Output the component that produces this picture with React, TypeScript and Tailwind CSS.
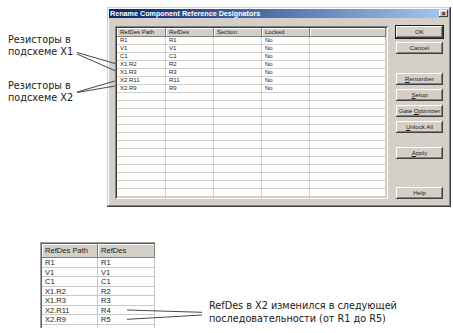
const topRows = [
  ["R1", "R1", "", "No"],
  ["V1", "V1", "", "No"],
  ["C1", "C1", "", "No"],
  ["X1.R2", "R2", "", "No"],
  ["X1.R3", "R3", "", "No"],
  ["X2.R11", "R11", "", "No"],
  ["X2.R9", "R9", "", "No"],
];

const bottomRows = [
  ["R1", "R1"],
  ["V1", "V1"],
  ["C1", "C1"],
  ["X1.R2", "R2"],
  ["X1.R3", "R3"],
  ["X2.R11", "R4"],
  ["X2.R9", "R5"],
  ["", ""],
];

const topCols = ["w-[49px]", "w-[48px]", "w-[48px]", "w-[48px]", "flex-1"];

function WinButton({ children, isDefault }: { children: React.ReactNode; isDefault?: boolean }) {
  return (
    <div
      className={`flex h-[12px] w-[47px] items-center justify-center bg-[#d4d0c8] text-[6.2px] leading-none text-[#1a1a1a] shadow-[inset_-1px_-1px_#404040,inset_1px_1px_#ffffff,inset_-2px_-2px_#808080] ${
        isDefault ? "outline outline-1 outline-[#202020]" : ""
      }`}
    >
      <span className="whitespace-pre">{children}</span>
    </div>
  );
}

function TopTable() {
  const empty = Array.from({ length: 14 }, () => ["", "", "", ""]);
  return (
    <div className="h-[173px] w-[273px] overflow-hidden bg-white p-[2px] shadow-[inset_1px_1px_#808080,inset_-1px_-1px_#ffffff,inset_2px_2px_#404040,inset_-2px_-2px_#d4d0c8]">
      <div className="flex h-[9px]">
        {["RefDes Path", "RefDes", "Section", "Locked", ""].map((h, i) => (
          <div
            key={i}
            className={`${topCols[i]} bg-[#d4d0c8] pl-[3px] text-[6px] leading-[9px] text-[#1a1a1a] shadow-[inset_-1px_-1px_#808080,inset_1px_1px_#ffffff]`}
          >
            {h}
          </div>
        ))}
      </div>
      {[...topRows, ...empty].map((r, i) => (
        <div key={i} className="flex h-[8px] border-b border-[#d4d0c8]">
          {[...r, ""].map((c, j) => (
            <div
              key={j}
              className={`${topCols[j]} border-r border-[#d4d0c8] pl-[3px] text-[6px] leading-[7px] text-[#222]`}
            >
              {c}
            </div>
          ))}
        </div>
      ))}
    </div>
  );
}

function Dialog() {
  return (
    <div className="flex h-[200px] w-[344px] flex-col bg-[#d4d0c8] p-[2px] shadow-[inset_-1px_-1px_#404040,inset_1px_1px_#d4d0c8,inset_-2px_-2px_#808080,inset_2px_2px_#ffffff]">
      <div className="flex h-[9px] items-center justify-between bg-gradient-to-r from-[#0a246a] to-[#a6caf0] pl-[1px] pr-[1px]">
        <span className="text-[7.2px] font-bold leading-none text-white">Rename Component Reference Designators</span>
        <div className="flex h-[7px] w-[9px] items-center justify-center bg-[#d4d0c8] text-[7px] font-bold leading-none text-black shadow-[inset_-1px_-1px_#404040,inset_1px_1px_#ffffff]">
          ×
        </div>
      </div>
      <div className="flex flex-1 gap-[8px] pl-[6px] pr-[6px] pt-[8px]">
        <TopTable />
        <div className="flex h-[173px] flex-col">
          <WinButton isDefault>OK</WinButton>
          <div className="mt-[4px]">
            <WinButton>Cancel</WinButton>
          </div>
          <div className="mt-[19px]">
            <WinButton>
              <span className="underline">R</span>enumber
            </WinButton>
          </div>
          <div className="mt-[4px]">
            <WinButton>
              <span className="underline">S</span>etup
            </WinButton>
          </div>
          <div className="mt-[4px]">
            <WinButton>
              {"Gate "}
              <span className="underline">O</span>ptimizer
            </WinButton>
          </div>
          <div className="mt-[4px]">
            <WinButton>
              <span className="underline">U</span>nlock All
            </WinButton>
          </div>
          <div className="mt-[14px]">
            <WinButton>
              <span className="underline">A</span>pply
            </WinButton>
          </div>
          <div className="mt-auto">
            <WinButton>Help</WinButton>
          </div>
        </div>
      </div>
    </div>
  );
}

function BottomTable() {
  return (
    <div className="h-[86px] w-[115px] overflow-hidden bg-white pl-[2px] pt-[2px] shadow-[inset_1px_1px_#a0a0a0,inset_2px_2px_#606060]">
      <div className="flex h-[14px]">
        {["RefDes Path", "RefDes"].map((h, i) => (
          <div
            key={i}
            className={`${i === 0 ? "w-[56px]" : "flex-1"} bg-[#d4d0c8] pl-[3px] text-[7.6px] leading-[14px] text-[#1a1a1a] shadow-[inset_-1px_-1px_#808080,inset_1px_1px_#ffffff]`}
          >
            {h}
          </div>
        ))}
      </div>
      {bottomRows.map((r, i) => (
        <div key={i} className="flex h-[9.5px] border-b border-[#c8c8c8]">
          <div className="w-[56px] border-r border-[#c8c8c8] pl-[3px] text-[7.5px] leading-[9px] text-[#222]">{r[0]}</div>
          <div className="flex-1 border-r border-[#c8c8c8] pl-[3px] text-[7.5px] leading-[9px] text-[#222]">{r[1]}</div>
        </div>
      ))}
    </div>
  );
}

export default function App() {
  return (
    <div className="relative h-[333px] w-[453px] overflow-hidden bg-white font-['Liberation_Sans',Arial,sans-serif]">
      <div className="flex pt-[7px]">
        <div className="flex w-[107px] flex-col gap-[20.6px] pl-[8px] pt-[26.6px] font-['DejaVu_Sans',sans-serif] text-[9.7px] leading-[12.7px] text-[#1a1a1a]">
          <div>
            Резисторы в<br />подсхеме X1
          </div>
          <div>
            Резисторы в<br />подсхеме X2
          </div>
        </div>
        <Dialog />
      </div>
      <div className="mt-[35px] flex">
        <div className="ml-[40px]">
          <BottomTable />
        </div>
        <div className="ml-[54px] mt-[56.5px] font-['DejaVu_Sans',sans-serif] text-[9.7px] leading-[13px] text-[#1a1a1a]">
          RefDes в X2 изменился в следующей
          <br />
          последовательности (от R1 до R5)
        </div>
      </div>
      <svg className="pointer-events-none absolute inset-0" width="453" height="333">
        <g stroke="#333" strokeWidth="0.9" fill="none">
          <line x1="77" y1="52.5" x2="115" y2="63.5" />
          <line x1="77" y1="54" x2="115" y2="70.7" />
          <line x1="77" y1="92" x2="115" y2="81" />
          <line x1="77" y1="92.5" x2="115" y2="86" />
          <line x1="127" y1="310" x2="202" y2="312.3" />
          <line x1="127" y1="319.3" x2="202" y2="315" />
        </g>
      </svg>
    </div>
  );
}
